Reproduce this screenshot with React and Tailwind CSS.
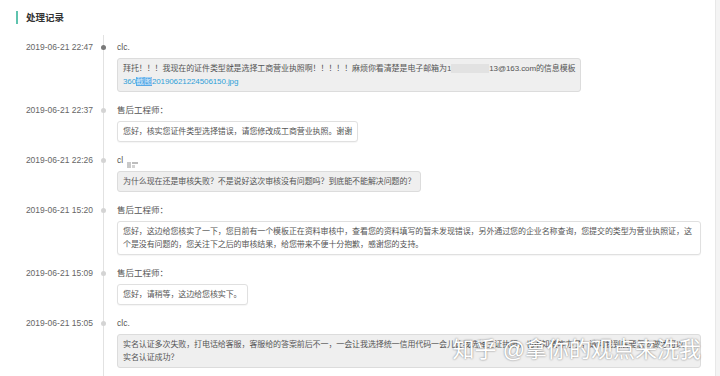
const FONT = '"Liberation Sans", "Noto Sans CJK SC", sans-serif';

const ENTRIES = [
  {
    time: '2019-06-21 22:47',
    name: 'clc.',
    tone: 'gray',
    first: true,
    body: (
      <>
        拜托！！！我现在的证件类型就是选择工商营业执照啊！！！！！麻烦你看清楚是电子邮箱为1
        <span className="inline-block h-[9px] w-[38px] bg-[#e2e2e2] align-middle" />
        13@163.com的信息模板
        <br />
        <span className="text-[#2f9fd8]">
          360<span className="bg-[#5aa9e6] text-[#d9ecfb]">截图</span>20190621224506150.jpg
        </span>
      </>
    ),
  },
  {
    time: '2019-06-21 22:37',
    name: '售后工程师：',
    tone: 'white',
    body: '您好，核实您证件类型选择错误，请您修改成工商营业执照。谢谢',
  },
  {
    time: '2019-06-21 22:26',
    name: 'cl',
    tone: 'gray',
    broken: true,
    body: '为什么现在还是审核失败？不是说好这次审核没有问题吗？到底能不能解决问题的？',
  },
  {
    time: '2019-06-21 15:20',
    name: '售后工程师：',
    tone: 'white',
    body:
      '您好，这边给您核实了一下，您目前有一个模板正在资料审核中，查看您的资料填写的暂未发现错误，另外通过您的企业名称查询，您提交的类型为营业执照证，这个是没有问题的，您关注下之后的审核结果，给您带来不便十分抱歉，感谢您的支持。',
  },
  {
    time: '2019-06-21 15:09',
    name: '售后工程师：',
    tone: 'white',
    body: '您好，请稍等，这边给您核实下。',
  },
  {
    time: '2019-06-21 15:05',
    name: 'clc.',
    tone: 'gray',
    last: true,
    body: (
      <>
        实名认证多次失败，打电话给客服，客服给的答案前后不一，一会让我选择统一信用代码一会儿让我选择三证执照，也不知道咋办了，请问我到底要怎么做才可以
        <br />
        实名认证成功？
      </>
    ),
  },
];

function Entry({ entry }) {
  const bubble =
    entry.tone === 'gray'
      ? 'bg-[#efefef] border-[#dcdcdc]'
      : 'bg-white border-[#e0e0e0] shadow-[0_1px_1px_rgba(0,0,0,0.04)]';
  return (
    <div className="flex">
      <div className="w-[103px] shrink-0 pr-[10px] pt-[6px] text-right text-[8.5px] leading-[12px] text-[#666]">
        {entry.time}
      </div>
      <div
        className={`relative flex-1 border-l border-[#e2e2e2] pl-[13px] pr-[14px] pt-[6px] ${
          entry.last ? 'pb-[10px]' : 'pb-[6px]'
        }`}
      >
        <span
          className={`absolute left-[-3px] top-[10px] h-[5px] w-[5px] rounded-full ${
            entry.first ? 'bg-[#7a7a7a]' : 'bg-[#d4d4d4]'
          }`}
        />
        <div className="h-[12px] text-[8.5px] leading-[12px] text-[#555]">{entry.name}</div>
        {entry.broken && (
          <svg
            className="absolute left-[23px] top-[14px]"
            width="12"
            height="7"
            viewBox="0 0 12 7"
          >
            <rect x="0" y="0" width="4" height="6" fill="#c9c9c9" />
            <rect x="5" y="0" width="6" height="2" fill="#bdbdbd" />
            <rect x="5" y="3" width="3" height="3" fill="#d2d2d2" />
          </svg>
        )}
        <div
          className={`mt-[5px] ${
            entry.last ? 'w-[584px]' : 'w-fit max-w-[584px]'
          } rounded-[3px] border px-[5px] py-[3px] text-[8px] leading-[13px] tracking-[-0.1px] text-[#555] ${bubble}`}
        >
          {entry.body}
        </div>
      </div>
    </div>
  );
}

export default function App() {
  return (
    <div className="flex h-[376px] w-[720px] overflow-hidden bg-white" style={{ fontFamily: FONT }}>
      <div className="relative flex-1">
        <div className="flex items-center pl-[16px] pt-[11px]">
          <span className="h-[13px] w-[2px] bg-[#5fc3ae]" />
          <span className="ml-[8px] text-[9.5px] font-bold leading-[13px] text-[#333]">处理记录</span>
        </div>
        <div className="mt-[11px]">
          {ENTRIES.map((e) => (
            <Entry key={e.time} entry={e} />
          ))}
        </div>
        <div className="absolute bottom-[13px] right-[14px] text-[22px] leading-[26px] text-white [text-shadow:0_0_2px_rgba(0,0,0,0.55)]">
          知乎 @拿你的观点来洗我
        </div>
      </div>
      <div className="w-[6px] shrink-0 border-l border-[#e8e8e8] bg-[#f4f4f4]" />
    </div>
  );
}
